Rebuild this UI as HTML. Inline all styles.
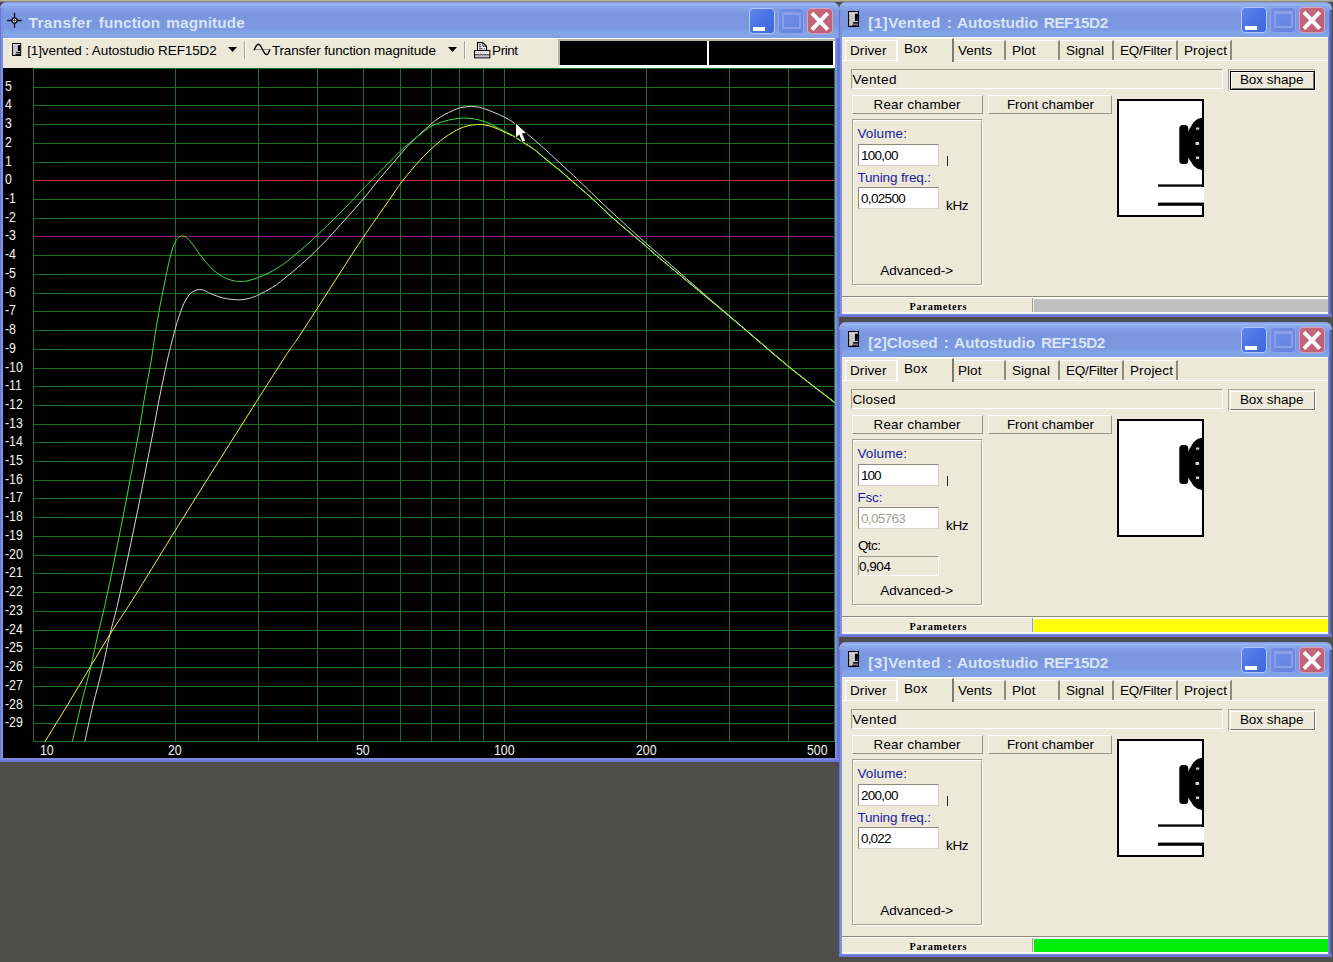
<!DOCTYPE html>
<html><head><meta charset="utf-8"><title>Transfer function magnitude</title>
<style>
html,body{margin:0;padding:0;}
body{width:1333px;height:962px;overflow:hidden;background:#4e4e4c;position:relative;font-family:"Liberation Sans", sans-serif;}
.b{position:absolute;box-sizing:border-box;}
.t{position:absolute;white-space:pre;display:block;}
svg{position:absolute;overflow:visible;}
.tb{background:linear-gradient(to bottom,#7f95da 0px,#9bb6f4 2px,#8eabee 4px,#7f9ce4 8px,#7a96df 14px,#7b98e0 26px,#81a5e7 31px,#82a6e8 33px,#7e9ee4 100%);}
.raised{background:#ece9d8;border-top:1px solid #fff;border-left:1px solid #fff;border-right:1px solid #99968a;border-bottom:1px solid #99968a;}
.sunk{border-top:1px solid #9d9a8a;border-left:1px solid #9d9a8a;border-right:1px solid #fff;border-bottom:1px solid #fff;}
</style></head><body>
<div class="b" style="left:0px;top:0px;width:1333px;height:2px;background:linear-gradient(to bottom,#b9b39b 0,#b3ad96 1px,#6d6a5e 2px);"></div>
<div class="b" style="left:0px;top:2px;width:839px;height:760px;background:#7685dc;border-radius:7px 7px 0 0;"></div>
<div class="b tb" style="left:0px;top:2px;width:839px;height:36px;border-radius:7px 7px 0 0;"></div>
<div class="b" style="left:0px;top:8px;width:1px;height:754px;background:#6a74d2;"></div>
<div class="b" style="left:1px;top:8px;width:2px;height:754px;background:#7b93e0;"></div>
<div class="b" style="left:835px;top:38px;width:2px;height:724px;background:#7b8fe0;"></div>
<div class="b" style="left:837px;top:38px;width:2px;height:724px;background:#6472d2;"></div>
<div class="b" style="left:0px;top:758px;width:839px;height:2px;background:#7a88e2;"></div>
<div class="b" style="left:0px;top:760px;width:839px;height:2px;background:#6a76d6;"></div>
<svg width="18" height="18" style="left:6px;top:11.7px"><path d="M8.5 0.8 V15.8 M1.2 8.5 H15.6" stroke="#0a0a1e" stroke-width="1.3" fill="none"/><circle cx="8.5" cy="8.5" r="2.6" fill="#fff" stroke="#0a0a1e" stroke-width="1.3"/><path d="M8.5 6.5V10.5M6.5 8.5H10.5" stroke="#444" stroke-width="0.8"/></svg><span class="t" style="left:28.60px;top:15.35px;font-size:15.3px;line-height:15.3px;color:#d9e4f9;letter-spacing:0.389px;font-family:'Liberation Sans', sans-serif;font-weight:bold;">Transfer</span>
<span class="t" style="left:98.80px;top:15.35px;font-size:15.3px;line-height:15.3px;color:#d9e4f9;letter-spacing:0.138px;font-family:'Liberation Sans', sans-serif;font-weight:bold;">function</span>
<span class="t" style="left:166.30px;top:15.35px;font-size:15.3px;line-height:15.3px;color:#d9e4f9;letter-spacing:0.143px;font-family:'Liberation Sans', sans-serif;font-weight:bold;">magnitude</span>
<div class="b" style="left:749px;top:8px;width:26px;height:26px;border-radius:4px;border:1px solid #b4c8f6;background:linear-gradient(135deg,#5f88ee 0%,#4a74e4 45%,#3f68dc 100%);"><div class="b" style="left:3px;top:17.5px;width:11.5px;height:4px;background:#fff;"></div>
</div>
<div class="b" style="left:778px;top:8px;width:26px;height:26px;border-radius:4px;border:1px solid #8ea3ea;background:linear-gradient(135deg,#728fe6 0%,#6483de 100%);"><div class="b" style="left:3px;top:3px;width:19px;height:17px;border:2px solid #8a9fea;border-top:3px solid #8a9fea;"></div>
</div>
<div class="b" style="left:807px;top:8px;width:26px;height:26px;border-radius:4px;border:1px solid #d9a0b6;background:linear-gradient(135deg,#c8687e 0%,#bd5f78 100%);"><svg width="24" height="24" style="left:0;top:0"><path d="M3.9 4.1 L19.8 20.6 M19.8 4.1 L3.9 20.6" stroke="#fff" stroke-width="3.9" stroke-linecap="butt" fill="none"/></svg></div>
<div class="b" style="left:3px;top:38px;width:832px;height:30px;background:#ece9d8;border-top:1px solid #fff;"></div>
<svg width="9.2" height="13" viewBox="0 0 11 16" preserveAspectRatio="none" style="left:12px;top:43px"><rect x="0" y="0" width="11" height="16" fill="#000"/><rect x="1.1" y="1.3" width="8.7" height="13.5" fill="#c6c6c6"/><rect x="1.1" y="1.3" width="8.7" height="1.2" fill="#e4e4e4"/><rect x="7" y="2.7" width="2.8" height="7.2" fill="#000"/><rect x="5" y="11.2" width="4.8" height="1.5" fill="#000"/><rect x="4.2" y="13.6" width="5.6" height="1.2" fill="#111"/></svg><span class="t" style="left:27.20px;top:44.07px;font-size:13.5px;line-height:13.5px;color:#000;letter-spacing:-0.116px;font-family:'Liberation Sans', sans-serif;">[1]vented : Autostudio REF15D2</span>
<svg width="12" height="8" style="left:227px;top:46px"><path d="M1 1 H10 L5.5 6 Z" fill="#000"/></svg><div class="b" style="left:244px;top:41px;width:1px;height:18px;background:#a7a592;"></div>
<div class="b" style="left:245px;top:41px;width:1px;height:18px;background:#fff;"></div>
<svg width="20" height="14" style="left:252px;top:43px"><path d="M2.5 6.5H18" stroke="#777" stroke-width="0.8" fill="none"/><path d="M2 7.2 C3.5 3.5,4.5 1.2,6.5 1.2 S9 4,10.5 6.5 S13 11.6,14.6 11.6 S17 9,18 6.3" stroke="#000" stroke-width="1.35" fill="none"/></svg><span class="t" style="left:271.90px;top:44.07px;font-size:13.5px;line-height:13.5px;color:#000;letter-spacing:-0.138px;font-family:'Liberation Sans', sans-serif;">Transfer function magnitude</span>
<svg width="12" height="8" style="left:447px;top:46px"><path d="M1 1 H10 L5.5 6 Z" fill="#000"/></svg><div class="b" style="left:464px;top:41px;width:1px;height:18px;background:#a7a592;"></div>
<div class="b" style="left:465px;top:41px;width:1px;height:18px;background:#fff;"></div>
<svg width="20" height="18" style="left:473px;top:41px"><path d="M4.5 9.5V1.6H9.8L13.5 5.3V9.5Z" fill="#fff" stroke="#000" stroke-width="1.1"/><path d="M9.8 1.6V5.3H13.5" fill="none" stroke="#000" stroke-width="0.8"/><rect x="6" y="3.4" width="1.8" height="0.9" fill="#000"/><rect x="6" y="5.4" width="2.4" height="0.9" fill="#000"/><rect x="6" y="7.4" width="3.6" height="0.9" fill="#000"/><rect x="10.8" y="7.4" width="1.1" height="0.9" fill="#000"/><rect x="1.6" y="9.6" width="15.2" height="7.2" fill="#dcdcdc" stroke="#000" stroke-width="1.1"/><rect x="2.2" y="10.2" width="14" height="3.2" fill="#f6f6f6"/><path d="M3 11.8H15" stroke="#9a9a9a" stroke-width="1.1" stroke-dasharray="1 1"/><path d="M1.6 13.9H16.8" stroke="#000" stroke-width="1"/><rect x="2.2" y="14.5" width="14" height="1.7" fill="#c4c4c4"/></svg><span class="t" style="left:492.10px;top:44.07px;font-size:13.5px;line-height:13.5px;color:#000;letter-spacing:-0.440px;font-family:'Liberation Sans', sans-serif;">Print</span>
<div class="b" style="left:558px;top:39px;width:277px;height:29px;background:#fdfdfb;"></div>
<div class="b" style="left:558px;top:39px;width:277px;height:2px;background:#b6b2a4;"></div>
<div class="b" style="left:558px;top:39px;width:2px;height:26px;background:#b6b2a4;"></div>
<div class="b" style="left:560px;top:41px;width:147px;height:24px;background:#000;"></div>
<div class="b" style="left:709px;top:41px;width:124px;height:24px;background:#000;"></div>
<div class="b" style="left:3px;top:68px;width:832px;height:690px;background:#000;"></div>
<svg width="1333" height="962" style="left:0;top:0" viewBox="0 0 1333 962"><g shape-rendering="crispEdges" fill="none"><path d="M33 68.5H835" stroke="#1b741b" stroke-width="1"/><path d="M33 87.5H835" stroke="#1b741b" stroke-width="1"/><path d="M33 105.5H835" stroke="#1b741b" stroke-width="1"/><path d="M33 124.5H835" stroke="#1b741b" stroke-width="1"/><path d="M33 143.5H835" stroke="#1b741b" stroke-width="1"/><path d="M33 162.5H835" stroke="#1b741b" stroke-width="1"/><path d="M33 180.5H835" stroke="#d42a2a" stroke-width="1"/><path d="M33 199.5H835" stroke="#1b741b" stroke-width="1"/><path d="M33 218.5H835" stroke="#1b741b" stroke-width="1"/><path d="M33 236.5H835" stroke="#8c1f8c" stroke-width="1"/><path d="M33 255.5H835" stroke="#1b741b" stroke-width="1"/><path d="M33 274.5H835" stroke="#1b741b" stroke-width="1"/><path d="M33 293.5H835" stroke="#1b741b" stroke-width="1"/><path d="M33 311.5H835" stroke="#1b741b" stroke-width="1"/><path d="M33 330.5H835" stroke="#1b741b" stroke-width="1"/><path d="M33 349.5H835" stroke="#1b741b" stroke-width="1"/><path d="M33 368.5H835" stroke="#1b741b" stroke-width="1"/><path d="M33 386.5H835" stroke="#1b741b" stroke-width="1"/><path d="M33 405.5H835" stroke="#1b741b" stroke-width="1"/><path d="M33 424.5H835" stroke="#1b741b" stroke-width="1"/><path d="M33 442.5H835" stroke="#1b741b" stroke-width="1"/><path d="M33 461.5H835" stroke="#1b741b" stroke-width="1"/><path d="M33 480.5H835" stroke="#1b741b" stroke-width="1"/><path d="M33 498.5H835" stroke="#1b741b" stroke-width="1"/><path d="M33 517.5H835" stroke="#1b741b" stroke-width="1"/><path d="M33 536.5H835" stroke="#1b741b" stroke-width="1"/><path d="M33 555.5H835" stroke="#1b741b" stroke-width="1"/><path d="M33 573.5H835" stroke="#1b741b" stroke-width="1"/><path d="M33 592.5H835" stroke="#1b741b" stroke-width="1"/><path d="M33 611.5H835" stroke="#1b741b" stroke-width="1"/><path d="M33 630.5H835" stroke="#1b741b" stroke-width="1"/><path d="M33 648.5H835" stroke="#1b741b" stroke-width="1"/><path d="M33 667.5H835" stroke="#1b741b" stroke-width="1"/><path d="M33 686.5H835" stroke="#1b741b" stroke-width="1"/><path d="M33 705.5H835" stroke="#1b741b" stroke-width="1"/><path d="M33 723.5H835" stroke="#1b741b" stroke-width="1"/><path d="M33 741.5H835" stroke="#1b741b" stroke-width="1"/><path d="M33.5 68V742" stroke="#1b741b" stroke-width="1"/><path d="M175.5 68V742" stroke="#1b741b" stroke-width="1"/><path d="M258.5 68V742" stroke="#1b741b" stroke-width="1"/><path d="M317.5 68V742" stroke="#1b741b" stroke-width="1"/><path d="M363.5 68V742" stroke="#1b741b" stroke-width="1"/><path d="M400.5 68V742" stroke="#1b741b" stroke-width="1"/><path d="M431.5 68V742" stroke="#1b741b" stroke-width="1"/><path d="M459.5 68V742" stroke="#1b741b" stroke-width="1"/><path d="M483.5 68V742" stroke="#1b741b" stroke-width="1"/><path d="M504.5 68V742" stroke="#1b741b" stroke-width="1"/><path d="M646.5 68V742" stroke="#1b741b" stroke-width="1"/><path d="M729.5 68V742" stroke="#1b741b" stroke-width="1"/><path d="M788.5 68V742" stroke="#1b741b" stroke-width="1"/><path d="M834.5 68V742" stroke="#1b741b" stroke-width="1"/></g><g fill="none" stroke-width="1" stroke-linejoin="round"><path d="M84.9 741.5C86.2 735.4,90.0 717.4,93.0 705.0C96.0 692.6,99.9 678.8,102.7 667.0C105.5 655.2,107.3 645.2,110.0 634.0C112.7 622.8,114.3 619.0,118.6 600.0C122.9 581.0,130.2 546.7,135.7 520.0C141.2 493.3,147.4 460.8,151.5 440.0C155.6 419.2,157.3 408.3,160.0 395.0C162.7 381.7,165.6 368.1,167.4 360.0C169.2 351.9,169.6 350.9,170.7 346.4C171.8 341.9,173.0 337.2,174.1 333.1C175.2 329.0,176.3 325.1,177.4 321.5C178.5 317.9,179.6 314.6,180.7 311.5C181.8 308.4,182.9 305.6,184.0 303.2C185.1 300.8,186.3 299.0,187.4 297.3C188.5 295.6,189.4 294.3,190.7 293.2C191.9 292.1,193.4 291.3,194.9 290.7C196.4 290.1,198.2 289.5,199.9 289.5C201.6 289.5,203.2 290.1,204.8 290.7C206.5 291.3,207.6 292.2,209.8 293.2C212.0 294.2,215.4 295.6,218.2 296.5C221.0 297.4,223.7 298.2,226.5 298.7C229.3 299.2,232.3 299.5,234.8 299.7C237.3 299.9,239.2 299.9,241.4 299.7C243.6 299.5,245.9 299.2,248.1 298.7C250.3 298.2,253.1 297.1,254.8 296.5C256.6 295.9,256.4 295.9,258.6 294.8C260.8 293.7,265.1 291.5,268.1 289.9C271.1 288.2,273.6 286.8,276.4 284.9C279.2 282.9,281.9 280.4,284.7 278.2C287.5 276.0,290.2 273.8,293.0 271.5C295.8 269.2,298.5 266.9,301.3 264.4C304.1 261.9,307.3 259.0,310.0 256.5C312.7 254.0,314.3 252.4,317.5 249.2C320.7 246.0,324.5 242.1,329.1 237.2C333.7 232.3,339.2 226.2,344.9 219.9C350.6 213.6,357.6 205.7,363.2 199.1C368.8 192.5,372.0 187.9,378.2 180.5C384.4 173.1,395.1 160.6,400.4 154.5C405.7 148.4,404.7 148.8,409.9 143.7C415.1 138.6,425.9 128.4,431.5 123.7C437.1 119.0,439.6 117.6,443.2 115.4C446.8 113.2,450.5 111.7,453.2 110.4C455.9 109.2,457.3 108.5,459.5 107.9C461.7 107.3,464.5 107.0,466.5 106.8C468.5 106.5,469.8 106.4,471.5 106.4C473.2 106.4,474.5 106.5,476.5 106.8C478.5 107.1,480.7 107.5,483.5 108.4C486.3 109.3,489.6 110.6,493.1 112.1C496.6 113.5,500.8 115.2,504.4 117.1C508.0 119.0,511.0 120.7,514.7 123.4C518.4 126.1,523.9 131.0,526.4 133.1C528.9 135.2,527.6 134.1,530.0 136.2C532.4 138.3,537.3 142.4,540.9 145.6C544.5 148.8,547.4 151.5,551.8 155.5C556.2 159.5,562.6 165.5,567.1 169.7C571.6 173.9,575.6 177.6,578.8 180.6C581.9 183.6,582.7 184.3,586.0 187.5C589.3 190.7,593.3 194.7,598.4 199.5C603.5 204.3,608.5 209.2,616.5 216.5C624.5 223.8,638.5 236.6,646.4 243.6C654.3 250.6,655.0 250.9,663.9 258.7C672.8 266.5,689.0 280.9,700.0 290.5C711.0 300.1,715.1 303.6,729.9 316.2C744.7 328.8,771.2 352.0,788.6 366.3C806.0 380.6,826.9 396.2,834.5 402.2" stroke="#d9d9d9"/><path d="M45.0 741.5C48.8 735.4,60.0 717.4,67.5 705.0C75.0 692.6,82.7 679.5,90.2 667.0C97.7 654.5,105.7 641.2,112.7 630.0C119.7 618.8,120.9 618.3,132.4 600.0C143.9 581.7,165.2 546.7,181.8 520.0C198.4 493.3,215.3 466.7,232.2 440.0C249.1 413.3,272.2 376.7,283.0 360.0C293.8 343.3,290.9 348.6,296.7 340.0C302.4 331.4,310.3 319.3,317.5 308.1C324.7 296.9,332.4 284.8,340.0 273.0C347.6 261.2,354.9 249.7,363.2 237.4C371.5 225.1,383.3 208.5,389.8 199.1C396.3 189.7,397.4 187.6,402.4 181.1C407.4 174.6,415.0 165.7,419.9 160.3C424.8 154.9,427.6 152.3,431.5 148.7C435.4 145.1,439.6 141.5,443.2 138.7C446.8 135.9,450.5 133.8,453.2 132.1C455.9 130.4,457.0 129.8,459.5 128.7C462.0 127.6,465.4 126.4,468.2 125.7C471.0 125.0,473.9 124.8,476.5 124.6C479.1 124.4,480.7 124.3,483.5 124.7C486.3 125.1,489.6 125.9,493.1 127.1C496.6 128.3,500.8 130.5,504.4 132.1C508.0 133.7,512.0 135.3,514.8 136.9C517.6 138.5,518.9 139.8,521.4 141.4C523.9 143.0,527.9 145.3,530.0 146.6C532.1 147.9,531.3 147.2,534.1 149.4C536.9 151.6,542.5 156.6,546.7 160.0C550.9 163.4,554.7 166.2,559.1 169.9C563.5 173.6,567.3 177.1,572.9 181.9C578.5 186.8,585.9 192.9,592.6 199.0C599.3 205.1,604.1 210.4,613.1 218.3C622.1 226.2,638.5 239.8,646.4 246.6C654.3 253.4,646.7 247.3,660.6 259.0C674.5 270.7,708.6 298.8,729.9 316.7C751.2 334.6,771.2 352.3,788.6 366.6C806.0 380.9,826.9 396.5,834.5 402.5" stroke="#f4f43c"/><path d="M72.4 741.5C73.8 735.4,78.0 717.4,81.0 705.0C84.0 692.6,87.9 678.8,90.7 667.0C93.5 655.2,95.5 645.2,98.0 634.0C100.5 622.8,101.9 619.0,106.0 600.0C110.1 581.0,117.2 546.7,122.4 520.0C127.6 493.3,133.6 460.8,137.4 440.0C141.2 419.2,142.7 408.3,145.0 395.0C147.3 381.7,149.6 370.3,151.3 360.0C153.0 349.7,153.9 342.0,155.3 333.1C156.7 324.2,158.6 313.7,159.9 306.5C161.2 299.3,162.1 295.4,163.2 289.9C164.3 284.3,165.5 278.5,166.6 273.2C167.7 267.9,168.8 262.6,169.9 258.2C171.0 253.8,172.1 249.7,173.2 246.6C174.3 243.5,175.5 241.3,176.6 239.6C177.7 237.9,178.9 237.2,179.9 236.6C180.9 236.0,181.4 235.8,182.4 235.9C183.4 236.0,184.4 236.1,185.7 236.9C186.9 237.7,188.4 239.1,189.9 240.8C191.4 242.6,193.0 244.8,194.9 247.4C196.8 250.0,199.0 253.4,201.5 256.6C204.0 259.8,207.0 263.7,209.8 266.6C212.6 269.5,215.4 272.0,218.2 274.0C221.0 276.0,223.7 277.3,226.5 278.5C229.3 279.7,232.6 280.5,234.8 281.0C237.0 281.5,237.6 281.6,239.8 281.5C242.0 281.4,245.0 281.4,248.1 280.7C251.2 280.0,255.3 278.6,258.6 277.4C261.9 276.1,265.1 274.6,268.1 273.2C271.1 271.8,273.6 270.4,276.4 268.7C279.2 267.0,281.9 265.2,284.7 263.2C287.5 261.2,290.2 258.9,293.0 256.6C295.8 254.3,298.5 252.1,301.3 249.6C304.1 247.1,307.3 244.3,310.0 241.9C312.7 239.5,312.5 239.7,317.5 234.9C322.5 230.1,332.3 220.9,339.9 213.2C347.5 205.5,358.1 194.2,363.2 188.8C368.3 183.4,364.5 187.3,370.7 181.0C376.9 174.7,393.9 157.5,400.4 151.2C406.9 144.8,406.6 145.7,409.9 142.9C413.1 140.1,416.3 137.4,419.9 134.6C423.5 131.8,427.6 128.4,431.5 126.2C435.4 124.0,439.6 122.8,443.2 121.6C446.8 120.4,450.5 119.7,453.2 119.2C455.9 118.7,457.6 118.6,459.5 118.4C461.4 118.2,462.5 118.0,464.8 118.1C467.1 118.1,470.0 118.2,473.1 118.7C476.2 119.2,480.2 120.1,483.5 121.2C486.8 122.3,489.6 123.7,493.1 125.4C496.6 127.1,500.8 129.3,504.4 131.2C508.0 133.0,512.0 134.8,514.8 136.5C517.6 138.2,518.9 139.5,521.4 141.2C523.9 142.8,527.9 145.1,530.0 146.4C532.1 147.7,531.3 147.0,534.1 149.2C536.9 151.4,542.5 156.4,546.7 159.8C550.9 163.2,554.7 166.0,559.1 169.7C563.5 173.3,567.3 176.8,572.9 181.7C578.5 186.5,585.9 192.7,592.6 198.8C599.3 204.9,604.1 210.2,613.1 218.1C622.1 226.0,638.5 239.6,646.4 246.4C654.3 253.2,646.7 247.2,660.6 258.9C674.5 270.6,708.6 298.7,729.9 316.6C751.2 334.5,771.2 352.2,788.6 366.5C806.0 380.8,826.9 396.4,834.5 402.4" stroke="#3fe03f"/><path d="M504.4 132.1C506.1 132.9,512.0 135.3,514.8 136.9C517.6 138.5,518.9 139.8,521.4 141.4C523.9 143.0,527.9 145.3,530.0 146.6C532.1 147.9,531.3 147.2,534.1 149.4C536.9 151.6,542.5 156.6,546.7 160.0C550.9 163.4,554.7 166.2,559.1 169.9C563.5 173.6,567.3 177.1,572.9 181.9C578.5 186.8,585.9 192.9,592.6 199.0C599.3 205.1,604.1 210.4,613.1 218.3C622.1 226.2,638.5 239.8,646.4 246.6C654.3 253.4,646.7 247.3,660.6 259.0C674.5 270.7,708.6 298.8,729.9 316.7C751.2 334.6,771.2 352.3,788.6 366.6C806.0 380.9,826.9 396.5,834.5 402.5" stroke="#e8f03c" stroke-dasharray="1.6 1.6"/></g><path d="M516 123.8 L516 137.4 L519.3 134.4 L522.3 141.7 L525.1 140.6 L522 133.4 L526 133 Z" fill="#fff" stroke="#000" stroke-width="1.6" stroke-linejoin="miter" paint-order="stroke"/></svg>
<span class="t" style="left:4.80px;top:79.25px;font-size:14px;line-height:14px;color:#f2f2f2;letter-spacing:0.000px;font-family:'Liberation Sans', sans-serif;transform:scaleX(0.88);transform-origin:0 50%;">5</span>
<span class="t" style="left:4.80px;top:97.25px;font-size:14px;line-height:14px;color:#f2f2f2;letter-spacing:0.000px;font-family:'Liberation Sans', sans-serif;transform:scaleX(0.88);transform-origin:0 50%;">4</span>
<span class="t" style="left:4.80px;top:116.25px;font-size:14px;line-height:14px;color:#f2f2f2;letter-spacing:0.000px;font-family:'Liberation Sans', sans-serif;transform:scaleX(0.88);transform-origin:0 50%;">3</span>
<span class="t" style="left:4.80px;top:135.25px;font-size:14px;line-height:14px;color:#f2f2f2;letter-spacing:0.000px;font-family:'Liberation Sans', sans-serif;transform:scaleX(0.88);transform-origin:0 50%;">2</span>
<span class="t" style="left:4.80px;top:154.25px;font-size:14px;line-height:14px;color:#f2f2f2;letter-spacing:0.000px;font-family:'Liberation Sans', sans-serif;transform:scaleX(0.88);transform-origin:0 50%;">1</span>
<span class="t" style="left:4.80px;top:172.25px;font-size:14px;line-height:14px;color:#f2f2f2;letter-spacing:0.000px;font-family:'Liberation Sans', sans-serif;transform:scaleX(0.88);transform-origin:0 50%;">0</span>
<span class="t" style="left:4.80px;top:191.25px;font-size:14px;line-height:14px;color:#f2f2f2;letter-spacing:0.000px;font-family:'Liberation Sans', sans-serif;transform:scaleX(0.88);transform-origin:0 50%;">-1</span>
<span class="t" style="left:4.80px;top:210.25px;font-size:14px;line-height:14px;color:#f2f2f2;letter-spacing:0.000px;font-family:'Liberation Sans', sans-serif;transform:scaleX(0.88);transform-origin:0 50%;">-2</span>
<span class="t" style="left:4.80px;top:228.25px;font-size:14px;line-height:14px;color:#f2f2f2;letter-spacing:0.000px;font-family:'Liberation Sans', sans-serif;transform:scaleX(0.88);transform-origin:0 50%;">-3</span>
<span class="t" style="left:4.80px;top:247.25px;font-size:14px;line-height:14px;color:#f2f2f2;letter-spacing:0.000px;font-family:'Liberation Sans', sans-serif;transform:scaleX(0.88);transform-origin:0 50%;">-4</span>
<span class="t" style="left:4.80px;top:266.25px;font-size:14px;line-height:14px;color:#f2f2f2;letter-spacing:0.000px;font-family:'Liberation Sans', sans-serif;transform:scaleX(0.88);transform-origin:0 50%;">-5</span>
<span class="t" style="left:4.80px;top:285.25px;font-size:14px;line-height:14px;color:#f2f2f2;letter-spacing:0.000px;font-family:'Liberation Sans', sans-serif;transform:scaleX(0.88);transform-origin:0 50%;">-6</span>
<span class="t" style="left:4.80px;top:303.25px;font-size:14px;line-height:14px;color:#f2f2f2;letter-spacing:0.000px;font-family:'Liberation Sans', sans-serif;transform:scaleX(0.88);transform-origin:0 50%;">-7</span>
<span class="t" style="left:4.80px;top:322.25px;font-size:14px;line-height:14px;color:#f2f2f2;letter-spacing:0.000px;font-family:'Liberation Sans', sans-serif;transform:scaleX(0.88);transform-origin:0 50%;">-8</span>
<span class="t" style="left:4.80px;top:341.25px;font-size:14px;line-height:14px;color:#f2f2f2;letter-spacing:0.000px;font-family:'Liberation Sans', sans-serif;transform:scaleX(0.88);transform-origin:0 50%;">-9</span>
<span class="t" style="left:4.80px;top:360.25px;font-size:14px;line-height:14px;color:#f2f2f2;letter-spacing:0.000px;font-family:'Liberation Sans', sans-serif;transform:scaleX(0.88);transform-origin:0 50%;">-10</span>
<span class="t" style="left:4.80px;top:378.25px;font-size:14px;line-height:14px;color:#f2f2f2;letter-spacing:0.000px;font-family:'Liberation Sans', sans-serif;transform:scaleX(0.88);transform-origin:0 50%;">-11</span>
<span class="t" style="left:4.80px;top:397.25px;font-size:14px;line-height:14px;color:#f2f2f2;letter-spacing:0.000px;font-family:'Liberation Sans', sans-serif;transform:scaleX(0.88);transform-origin:0 50%;">-12</span>
<span class="t" style="left:4.80px;top:416.25px;font-size:14px;line-height:14px;color:#f2f2f2;letter-spacing:0.000px;font-family:'Liberation Sans', sans-serif;transform:scaleX(0.88);transform-origin:0 50%;">-13</span>
<span class="t" style="left:4.80px;top:434.25px;font-size:14px;line-height:14px;color:#f2f2f2;letter-spacing:0.000px;font-family:'Liberation Sans', sans-serif;transform:scaleX(0.88);transform-origin:0 50%;">-14</span>
<span class="t" style="left:4.80px;top:453.25px;font-size:14px;line-height:14px;color:#f2f2f2;letter-spacing:0.000px;font-family:'Liberation Sans', sans-serif;transform:scaleX(0.88);transform-origin:0 50%;">-15</span>
<span class="t" style="left:4.80px;top:472.25px;font-size:14px;line-height:14px;color:#f2f2f2;letter-spacing:0.000px;font-family:'Liberation Sans', sans-serif;transform:scaleX(0.88);transform-origin:0 50%;">-16</span>
<span class="t" style="left:4.80px;top:490.25px;font-size:14px;line-height:14px;color:#f2f2f2;letter-spacing:0.000px;font-family:'Liberation Sans', sans-serif;transform:scaleX(0.88);transform-origin:0 50%;">-17</span>
<span class="t" style="left:4.80px;top:509.25px;font-size:14px;line-height:14px;color:#f2f2f2;letter-spacing:0.000px;font-family:'Liberation Sans', sans-serif;transform:scaleX(0.88);transform-origin:0 50%;">-18</span>
<span class="t" style="left:4.80px;top:528.25px;font-size:14px;line-height:14px;color:#f2f2f2;letter-spacing:0.000px;font-family:'Liberation Sans', sans-serif;transform:scaleX(0.88);transform-origin:0 50%;">-19</span>
<span class="t" style="left:4.80px;top:547.25px;font-size:14px;line-height:14px;color:#f2f2f2;letter-spacing:0.000px;font-family:'Liberation Sans', sans-serif;transform:scaleX(0.88);transform-origin:0 50%;">-20</span>
<span class="t" style="left:4.80px;top:565.25px;font-size:14px;line-height:14px;color:#f2f2f2;letter-spacing:0.000px;font-family:'Liberation Sans', sans-serif;transform:scaleX(0.88);transform-origin:0 50%;">-21</span>
<span class="t" style="left:4.80px;top:584.25px;font-size:14px;line-height:14px;color:#f2f2f2;letter-spacing:0.000px;font-family:'Liberation Sans', sans-serif;transform:scaleX(0.88);transform-origin:0 50%;">-22</span>
<span class="t" style="left:4.80px;top:603.25px;font-size:14px;line-height:14px;color:#f2f2f2;letter-spacing:0.000px;font-family:'Liberation Sans', sans-serif;transform:scaleX(0.88);transform-origin:0 50%;">-23</span>
<span class="t" style="left:4.80px;top:622.25px;font-size:14px;line-height:14px;color:#f2f2f2;letter-spacing:0.000px;font-family:'Liberation Sans', sans-serif;transform:scaleX(0.88);transform-origin:0 50%;">-24</span>
<span class="t" style="left:4.80px;top:640.25px;font-size:14px;line-height:14px;color:#f2f2f2;letter-spacing:0.000px;font-family:'Liberation Sans', sans-serif;transform:scaleX(0.88);transform-origin:0 50%;">-25</span>
<span class="t" style="left:4.80px;top:659.25px;font-size:14px;line-height:14px;color:#f2f2f2;letter-spacing:0.000px;font-family:'Liberation Sans', sans-serif;transform:scaleX(0.88);transform-origin:0 50%;">-26</span>
<span class="t" style="left:4.80px;top:678.25px;font-size:14px;line-height:14px;color:#f2f2f2;letter-spacing:0.000px;font-family:'Liberation Sans', sans-serif;transform:scaleX(0.88);transform-origin:0 50%;">-27</span>
<span class="t" style="left:4.80px;top:697.25px;font-size:14px;line-height:14px;color:#f2f2f2;letter-spacing:0.000px;font-family:'Liberation Sans', sans-serif;transform:scaleX(0.88);transform-origin:0 50%;">-28</span>
<span class="t" style="left:4.80px;top:715.25px;font-size:14px;line-height:14px;color:#f2f2f2;letter-spacing:0.000px;font-family:'Liberation Sans', sans-serif;transform:scaleX(0.88);transform-origin:0 50%;">-29</span>
<span class="t" style="left:40.20px;top:743.15px;font-size:14px;line-height:14px;color:#f2f2f2;letter-spacing:0.000px;font-family:'Liberation Sans', sans-serif;transform:scaleX(0.88);transform-origin:0 50%;">10</span>
<span class="t" style="left:168.20px;top:743.15px;font-size:14px;line-height:14px;color:#f2f2f2;letter-spacing:0.000px;font-family:'Liberation Sans', sans-serif;transform:scaleX(0.88);transform-origin:0 50%;">20</span>
<span class="t" style="left:355.70px;top:743.15px;font-size:14px;line-height:14px;color:#f2f2f2;letter-spacing:0.000px;font-family:'Liberation Sans', sans-serif;transform:scaleX(0.88);transform-origin:0 50%;">50</span>
<span class="t" style="left:493.70px;top:743.15px;font-size:14px;line-height:14px;color:#f2f2f2;letter-spacing:0.000px;font-family:'Liberation Sans', sans-serif;transform:scaleX(0.88);transform-origin:0 50%;">100</span>
<span class="t" style="left:635.70px;top:743.15px;font-size:14px;line-height:14px;color:#f2f2f2;letter-spacing:0.000px;font-family:'Liberation Sans', sans-serif;transform:scaleX(0.88);transform-origin:0 50%;">200</span>
<span class="t" style="left:806.70px;top:743.15px;font-size:14px;line-height:14px;color:#f2f2f2;letter-spacing:0.000px;font-family:'Liberation Sans', sans-serif;transform:scaleX(0.88);transform-origin:0 50%;">500</span>
<div class="b" style="left:839px;top:2px;width:493px;height:315px;background:#7685dc;border-radius:7px 7px 0 0;"></div>
<div class="b tb" style="left:839px;top:2px;width:493px;height:35px;border-radius:7px 7px 0 0;"></div>
<div class="b" style="left:839px;top:10px;width:1px;height:307px;background:#6a74d2;"></div>
<div class="b" style="left:840px;top:10px;width:2px;height:307px;background:#7b93e0;"></div>
<div class="b" style="left:1328px;top:37px;width:1px;height:280px;background:#7587dc;"></div>
<div class="b" style="left:1329px;top:10px;width:1px;height:307px;background:#6878d0;"></div>
<div class="b" style="left:1330px;top:10px;width:2px;height:307px;background:linear-gradient(to right,#5a68bc,#4c5596);"></div>
<div class="b" style="left:839px;top:314px;width:493px;height:1px;background:#7a88e2;"></div>
<div class="b" style="left:839px;top:315px;width:493px;height:2px;background:#6a76d6;"></div>
<div class="b" style="left:842px;top:37px;width:486px;height:277px;background:#ece9d8;border-top:1px solid #fff;"></div>
<svg width="11" height="16" viewBox="0 0 11 16" preserveAspectRatio="none" style="left:848px;top:11px"><rect x="0" y="0" width="11" height="16" fill="#000"/><rect x="1.1" y="1.3" width="8.7" height="13.5" fill="#c6c6c6"/><rect x="1.1" y="1.3" width="8.7" height="1.2" fill="#e4e4e4"/><rect x="7" y="2.7" width="2.8" height="7.2" fill="#000"/><rect x="5" y="11.2" width="4.8" height="1.5" fill="#000"/><rect x="4.2" y="13.6" width="5.6" height="1.2" fill="#111"/></svg><span class="t" style="left:868.20px;top:14.65px;font-size:15.3px;line-height:15.3px;color:#d9e4f9;letter-spacing:0.417px;font-family:'Liberation Sans', sans-serif;font-weight:bold;">[1]Vented</span>
<span class="t" style="left:946.70px;top:14.65px;font-size:15.3px;line-height:15.3px;color:#d9e4f9;letter-spacing:0.000px;font-family:'Liberation Sans', sans-serif;font-weight:bold;">:</span>
<span class="t" style="left:957.00px;top:14.65px;font-size:15.3px;line-height:15.3px;color:#d9e4f9;letter-spacing:0.030px;font-family:'Liberation Sans', sans-serif;font-weight:bold;">Autostudio</span>
<span class="t" style="left:1043.80px;top:14.65px;font-size:15.3px;line-height:15.3px;color:#d9e4f9;letter-spacing:-0.463px;font-family:'Liberation Sans', sans-serif;font-weight:bold;">REF15D2</span>
<div class="b" style="left:1241px;top:7px;width:26px;height:26px;border-radius:4px;border:1px solid #b4c8f6;background:linear-gradient(135deg,#5f88ee 0%,#4a74e4 45%,#3f68dc 100%);"><div class="b" style="left:3px;top:17.5px;width:11.5px;height:4px;background:#fff;"></div>
</div>
<div class="b" style="left:1270px;top:7px;width:26px;height:26px;border-radius:4px;border:1px solid #8ea3ea;background:linear-gradient(135deg,#728fe6 0%,#6483de 100%);"><div class="b" style="left:3px;top:3px;width:19px;height:17px;border:2px solid #8a9fea;border-top:3px solid #8a9fea;"></div>
</div>
<div class="b" style="left:1299px;top:7px;width:26px;height:26px;border-radius:4px;border:1px solid #d9a0b6;background:linear-gradient(135deg,#c8687e 0%,#bd5f78 100%);"><svg width="24" height="24" style="left:0;top:0"><path d="M3.9 4.1 L19.8 20.6 M19.8 4.1 L3.9 20.6" stroke="#fff" stroke-width="3.9" stroke-linecap="butt" fill="none"/></svg></div>
<div class="b" style="left:842px;top:60px;width:486px;height:1px;background:#fff;"></div>
<div class="b" style="left:845px;top:40px;width:52px;height:20px;background:#ece9d8;border-top:1px solid #fff;border-left:1px solid #fff;border-right:1px solid #fbfaf4;"></div>
<span class="t" style="left:849.90px;top:44.17px;font-size:13.5px;line-height:13.5px;color:#000;letter-spacing:0.120px;font-family:'Liberation Sans', sans-serif;">Driver</span>
<div class="b" style="left:897px;top:38px;width:57px;height:24px;background:#ece9d8;border-top:1px solid #fff;border-left:1px solid #fff;border-right:2px solid #7d7a6b;"></div>
<span class="t" style="left:903.90px;top:42.17px;font-size:13.5px;line-height:13.5px;color:#000;letter-spacing:0.119px;font-family:'Liberation Sans', sans-serif;">Box</span>
<div class="b" style="left:954px;top:40px;width:52px;height:20px;background:#ece9d8;border-top:1px solid #fff;border-right:2px solid #8f8c7c;"></div>
<span class="t" style="left:957.90px;top:44.17px;font-size:13.5px;line-height:13.5px;color:#000;letter-spacing:0.056px;font-family:'Liberation Sans', sans-serif;">Vents</span>
<div class="b" style="left:1006px;top:40px;width:54px;height:20px;background:#ece9d8;border-top:1px solid #fff;border-right:2px solid #8f8c7c;"></div>
<span class="t" style="left:1011.90px;top:44.17px;font-size:13.5px;line-height:13.5px;color:#000;letter-spacing:0.079px;font-family:'Liberation Sans', sans-serif;">Plot</span>
<div class="b" style="left:1060px;top:40px;width:54px;height:20px;background:#ece9d8;border-top:1px solid #fff;border-right:2px solid #8f8c7c;"></div>
<span class="t" style="left:1065.90px;top:44.17px;font-size:13.5px;line-height:13.5px;color:#000;letter-spacing:0.095px;font-family:'Liberation Sans', sans-serif;">Signal</span>
<div class="b" style="left:1114px;top:40px;width:64px;height:20px;background:#ece9d8;border-top:1px solid #fff;border-right:2px solid #8f8c7c;"></div>
<span class="t" style="left:1119.90px;top:44.17px;font-size:13.5px;line-height:13.5px;color:#000;letter-spacing:-0.157px;font-family:'Liberation Sans', sans-serif;">EQ/Filter</span>
<div class="b" style="left:1178px;top:40px;width:54px;height:20px;background:#ece9d8;border-top:1px solid #fff;border-right:2px solid #8f8c7c;"></div>
<span class="t" style="left:1183.90px;top:44.17px;font-size:13.5px;line-height:13.5px;color:#000;letter-spacing:0.164px;font-family:'Liberation Sans', sans-serif;">Project</span>
<div class="b sunk" style="left:851px;top:69px;width:372px;height:20px;"></div>
<span class="t" style="left:852.40px;top:73.07px;font-size:13.5px;line-height:13.5px;color:#000;letter-spacing:0.391px;font-family:'Liberation Sans', sans-serif;">Vented</span>
<div class="b" style="left:1228px;top:69px;width:88px;height:22px;border-top:1px solid #aca899;border-left:1px solid #aca899;border-right:1px solid #fff;border-bottom:1px solid #fff;"></div>
<div class="b" style="left:1230px;top:71px;width:85px;height:19px;border:1px solid #000;background:#ece9d8;"></div>
<div class="b" style="left:1231px;top:72px;width:83px;height:17px;border-top:1px solid #fff;border-left:1px solid #fff;border-right:1px solid #77756a;border-bottom:1px solid #77756a;"></div>
<span class="t" style="left:1239.90px;top:73.37px;font-size:13.5px;line-height:13.5px;color:#000;letter-spacing:-0.037px;font-family:'Liberation Sans', sans-serif;">Box shape</span>
<div class="b raised" style="left:852px;top:95px;width:131px;height:19px;"></div>
<span class="t" style="left:873.60px;top:98.07px;font-size:13.5px;line-height:13.5px;color:#000;letter-spacing:0.133px;font-family:'Liberation Sans', sans-serif;">Rear chamber</span>
<div class="b raised" style="left:988px;top:95px;width:124px;height:19px;"></div>
<span class="t" style="left:1006.90px;top:98.07px;font-size:13.5px;line-height:13.5px;color:#000;letter-spacing:-0.065px;font-family:'Liberation Sans', sans-serif;">Front chamber</span>
<svg width="90" height="120" style="left:1117px;top:99px"><rect x="1" y="1" width="85" height="116" fill="#fff" stroke="#000" stroke-width="2"/><rect x="62.3" y="26" width="9" height="39" rx="3.5" fill="#000"/><path d="M70 34 L73 29.3 L76.5 23.3 L80.5 20 L86 18.6 V71.5 L80.5 69.8 L76.5 66.8 L73 61.2 L70 57 Z" fill="#000"/><rect x="79" y="28.5" width="3.2" height="2.2" fill="#cfcfcf"/><rect x="78.5" y="43" width="3.6" height="3" fill="#cfcfcf"/><rect x="79" y="57.5" width="3.2" height="2.6" fill="#cfcfcf"/><rect x="85" y="88" width="2" height="16" fill="#fff"/><rect x="41" y="85.4" width="46" height="2.3" fill="#000"/><rect x="41" y="103.6" width="46" height="3.2" fill="#000"/></svg><div class="b" style="left:852px;top:119px;width:131px;height:167px;border:1px solid #a5a292;border-right:1px solid #fff;border-bottom:1px solid #fff;"></div>
<div class="b" style="left:853px;top:120px;width:129px;height:165px;border-left:1px solid #fff;border-top:1px solid #fff;border-right:1px solid #a5a292;border-bottom:1px solid #a5a292;"></div>
<span class="t" style="left:857.40px;top:127.07px;font-size:13.5px;line-height:13.5px;color:#1a1aa4;letter-spacing:0.137px;font-family:'Liberation Sans', sans-serif;">Volume:</span>
<div class="b" style="left:858px;top:144px;width:81px;height:22px;background:#fff;border-top:1px solid #8c8a7c;border-left:1px solid #8c8a7c;border-right:1px solid #d8d5c6;border-bottom:1px solid #d8d5c6;"></div>
<div class="b" style="left:947px;top:156px;width:1px;height:10px;background:#222;"></div>
<span class="t" style="left:861.00px;top:148.67px;font-size:13.5px;line-height:13.5px;color:#000;letter-spacing:-0.738px;font-family:'Liberation Sans', sans-serif;">100,00</span>
<span class="t" style="left:857.40px;top:170.87px;font-size:13.5px;line-height:13.5px;color:#1a1aa4;letter-spacing:-0.141px;font-family:'Liberation Sans', sans-serif;">Tuning freq.:</span>
<div class="b" style="left:858px;top:187px;width:81px;height:22px;background:#fff;border-top:1px solid #8c8a7c;border-left:1px solid #8c8a7c;border-right:1px solid #d8d5c6;border-bottom:1px solid #d8d5c6;"></div>
<span class="t" style="left:861.00px;top:191.57px;font-size:13.5px;line-height:13.5px;color:#000;letter-spacing:-0.667px;font-family:'Liberation Sans', sans-serif;">0,02500</span>
<span class="t" style="left:946.00px;top:198.77px;font-size:13.5px;line-height:13.5px;color:#000;letter-spacing:-0.325px;font-family:'Liberation Sans', sans-serif;">kHz</span>
<span class="t" style="left:880.20px;top:264.47px;font-size:13.5px;line-height:13.5px;color:#000;letter-spacing:0.064px;font-family:'Liberation Sans', sans-serif;">Advanced-&gt;</span>
<div class="b" style="left:842px;top:296px;width:486px;height:1px;background:#8d8a7a;"></div>
<div class="b" style="left:842px;top:297px;width:486px;height:1px;background:#fff;"></div>
<div class="b" style="left:843px;top:298px;width:190px;height:14px;background:#ece9d8;border-right:1px solid #a5a292;"></div>
<div class="b" style="left:1034px;top:298px;width:294px;height:1px;background:#fff;"></div>
<div class="b" style="left:1034px;top:299px;width:294px;height:13px;background:#c0c0c0;"></div>
<div class="b" style="left:842px;top:312px;width:486px;height:2px;background:linear-gradient(#fff,#eef0fa);"></div>
<span class="t" style="left:909.60px;top:301.57px;font-size:10.3px;line-height:10.3px;color:#000;letter-spacing:0.678px;font-family:'Liberation Serif', serif;font-weight:bold;">Parameters</span>
<div class="b" style="left:839px;top:322px;width:493px;height:315px;background:#7685dc;border-radius:7px 7px 0 0;"></div>
<div class="b tb" style="left:839px;top:322px;width:493px;height:35px;border-radius:7px 7px 0 0;"></div>
<div class="b" style="left:839px;top:330px;width:1px;height:307px;background:#6a74d2;"></div>
<div class="b" style="left:840px;top:330px;width:2px;height:307px;background:#7b93e0;"></div>
<div class="b" style="left:1328px;top:357px;width:1px;height:280px;background:#7587dc;"></div>
<div class="b" style="left:1329px;top:330px;width:1px;height:307px;background:#6878d0;"></div>
<div class="b" style="left:1330px;top:330px;width:2px;height:307px;background:linear-gradient(to right,#5a68bc,#4c5596);"></div>
<div class="b" style="left:839px;top:634px;width:493px;height:1px;background:#7a88e2;"></div>
<div class="b" style="left:839px;top:635px;width:493px;height:2px;background:#6a76d6;"></div>
<div class="b" style="left:842px;top:357px;width:486px;height:277px;background:#ece9d8;border-top:1px solid #fff;"></div>
<svg width="11" height="16" viewBox="0 0 11 16" preserveAspectRatio="none" style="left:848px;top:331px"><rect x="0" y="0" width="11" height="16" fill="#000"/><rect x="1.1" y="1.3" width="8.7" height="13.5" fill="#c6c6c6"/><rect x="1.1" y="1.3" width="8.7" height="1.2" fill="#e4e4e4"/><rect x="7" y="2.7" width="2.8" height="7.2" fill="#000"/><rect x="5" y="11.2" width="4.8" height="1.5" fill="#000"/><rect x="4.2" y="13.6" width="5.6" height="1.2" fill="#111"/></svg><span class="t" style="left:868.20px;top:334.65px;font-size:15.3px;line-height:15.3px;color:#d9e4f9;letter-spacing:-0.051px;font-family:'Liberation Sans', sans-serif;font-weight:bold;">[2]Closed</span>
<span class="t" style="left:943.80px;top:334.65px;font-size:15.3px;line-height:15.3px;color:#d9e4f9;letter-spacing:0.000px;font-family:'Liberation Sans', sans-serif;font-weight:bold;">:</span>
<span class="t" style="left:954.10px;top:334.65px;font-size:15.3px;line-height:15.3px;color:#d9e4f9;letter-spacing:0.030px;font-family:'Liberation Sans', sans-serif;font-weight:bold;">Autostudio</span>
<span class="t" style="left:1040.90px;top:334.65px;font-size:15.3px;line-height:15.3px;color:#d9e4f9;letter-spacing:-0.463px;font-family:'Liberation Sans', sans-serif;font-weight:bold;">REF15D2</span>
<div class="b" style="left:1241px;top:327px;width:26px;height:26px;border-radius:4px;border:1px solid #b4c8f6;background:linear-gradient(135deg,#5f88ee 0%,#4a74e4 45%,#3f68dc 100%);"><div class="b" style="left:3px;top:17.5px;width:11.5px;height:4px;background:#fff;"></div>
</div>
<div class="b" style="left:1270px;top:327px;width:26px;height:26px;border-radius:4px;border:1px solid #8ea3ea;background:linear-gradient(135deg,#728fe6 0%,#6483de 100%);"><div class="b" style="left:3px;top:3px;width:19px;height:17px;border:2px solid #8a9fea;border-top:3px solid #8a9fea;"></div>
</div>
<div class="b" style="left:1299px;top:327px;width:26px;height:26px;border-radius:4px;border:1px solid #d9a0b6;background:linear-gradient(135deg,#c8687e 0%,#bd5f78 100%);"><svg width="24" height="24" style="left:0;top:0"><path d="M3.9 4.1 L19.8 20.6 M19.8 4.1 L3.9 20.6" stroke="#fff" stroke-width="3.9" stroke-linecap="butt" fill="none"/></svg></div>
<div class="b" style="left:842px;top:380px;width:486px;height:1px;background:#fff;"></div>
<div class="b" style="left:845px;top:360px;width:52px;height:20px;background:#ece9d8;border-top:1px solid #fff;border-left:1px solid #fff;border-right:1px solid #fbfaf4;"></div>
<span class="t" style="left:849.90px;top:364.17px;font-size:13.5px;line-height:13.5px;color:#000;letter-spacing:0.120px;font-family:'Liberation Sans', sans-serif;">Driver</span>
<div class="b" style="left:897px;top:358px;width:57px;height:24px;background:#ece9d8;border-top:1px solid #fff;border-left:1px solid #fff;border-right:2px solid #7d7a6b;"></div>
<span class="t" style="left:903.90px;top:362.17px;font-size:13.5px;line-height:13.5px;color:#000;letter-spacing:0.119px;font-family:'Liberation Sans', sans-serif;">Box</span>
<div class="b" style="left:954px;top:360px;width:52px;height:20px;background:#ece9d8;border-top:1px solid #fff;border-right:2px solid #8f8c7c;"></div>
<span class="t" style="left:957.90px;top:364.17px;font-size:13.5px;line-height:13.5px;color:#000;letter-spacing:0.079px;font-family:'Liberation Sans', sans-serif;">Plot</span>
<div class="b" style="left:1006px;top:360px;width:54px;height:20px;background:#ece9d8;border-top:1px solid #fff;border-right:2px solid #8f8c7c;"></div>
<span class="t" style="left:1011.90px;top:364.17px;font-size:13.5px;line-height:13.5px;color:#000;letter-spacing:0.095px;font-family:'Liberation Sans', sans-serif;">Signal</span>
<div class="b" style="left:1060px;top:360px;width:64px;height:20px;background:#ece9d8;border-top:1px solid #fff;border-right:2px solid #8f8c7c;"></div>
<span class="t" style="left:1065.90px;top:364.17px;font-size:13.5px;line-height:13.5px;color:#000;letter-spacing:-0.157px;font-family:'Liberation Sans', sans-serif;">EQ/Filter</span>
<div class="b" style="left:1124px;top:360px;width:54px;height:20px;background:#ece9d8;border-top:1px solid #fff;border-right:2px solid #8f8c7c;"></div>
<span class="t" style="left:1129.90px;top:364.17px;font-size:13.5px;line-height:13.5px;color:#000;letter-spacing:0.164px;font-family:'Liberation Sans', sans-serif;">Project</span>
<div class="b sunk" style="left:851px;top:389px;width:372px;height:20px;"></div>
<span class="t" style="left:852.40px;top:393.07px;font-size:13.5px;line-height:13.5px;color:#000;letter-spacing:0.195px;font-family:'Liberation Sans', sans-serif;">Closed</span>
<div class="b" style="left:1228px;top:389px;width:88px;height:22px;border-top:1px solid #aca899;border-left:1px solid #aca899;border-right:1px solid #fff;border-bottom:1px solid #fff;"></div>
<div class="b" style="left:1230px;top:391px;width:85px;height:19px;background:#ece9d8;border-top:1px solid #fff;border-left:1px solid #fff;border-right:1px solid #77756a;border-bottom:1px solid #77756a;"></div>
<span class="t" style="left:1239.90px;top:393.37px;font-size:13.5px;line-height:13.5px;color:#000;letter-spacing:-0.037px;font-family:'Liberation Sans', sans-serif;">Box shape</span>
<div class="b raised" style="left:852px;top:415px;width:131px;height:19px;"></div>
<span class="t" style="left:873.60px;top:418.07px;font-size:13.5px;line-height:13.5px;color:#000;letter-spacing:0.133px;font-family:'Liberation Sans', sans-serif;">Rear chamber</span>
<div class="b raised" style="left:988px;top:415px;width:124px;height:19px;"></div>
<span class="t" style="left:1006.90px;top:418.07px;font-size:13.5px;line-height:13.5px;color:#000;letter-spacing:-0.065px;font-family:'Liberation Sans', sans-serif;">Front chamber</span>
<svg width="90" height="120" style="left:1117px;top:419px"><rect x="1" y="1" width="85" height="116" fill="#fff" stroke="#000" stroke-width="2"/><rect x="62.3" y="26" width="9" height="39" rx="3.5" fill="#000"/><path d="M70 34 L73 29.3 L76.5 23.3 L80.5 20 L86 18.6 V71.5 L80.5 69.8 L76.5 66.8 L73 61.2 L70 57 Z" fill="#000"/><rect x="79" y="28.5" width="3.2" height="2.2" fill="#cfcfcf"/><rect x="78.5" y="43" width="3.6" height="3" fill="#cfcfcf"/><rect x="79" y="57.5" width="3.2" height="2.6" fill="#cfcfcf"/></svg><div class="b" style="left:852px;top:439px;width:131px;height:167px;border:1px solid #a5a292;border-right:1px solid #fff;border-bottom:1px solid #fff;"></div>
<div class="b" style="left:853px;top:440px;width:129px;height:165px;border-left:1px solid #fff;border-top:1px solid #fff;border-right:1px solid #a5a292;border-bottom:1px solid #a5a292;"></div>
<span class="t" style="left:857.40px;top:447.07px;font-size:13.5px;line-height:13.5px;color:#1a1aa4;letter-spacing:0.137px;font-family:'Liberation Sans', sans-serif;">Volume:</span>
<div class="b" style="left:858px;top:464px;width:81px;height:22px;background:#fff;border-top:1px solid #8c8a7c;border-left:1px solid #8c8a7c;border-right:1px solid #d8d5c6;border-bottom:1px solid #d8d5c6;"></div>
<div class="b" style="left:947px;top:476px;width:1px;height:10px;background:#222;"></div>
<span class="t" style="left:861.00px;top:468.67px;font-size:13.5px;line-height:13.5px;color:#000;letter-spacing:-1.012px;font-family:'Liberation Sans', sans-serif;">100</span>
<span class="t" style="left:857.40px;top:490.87px;font-size:13.5px;line-height:13.5px;color:#1a1aa4;letter-spacing:-0.166px;font-family:'Liberation Sans', sans-serif;">Fsc:</span>
<div class="b" style="left:858px;top:507px;width:81px;height:22px;background:#fff;border-top:1px solid #8c8a7c;border-left:1px solid #8c8a7c;border-right:1px solid #d8d5c6;border-bottom:1px solid #d8d5c6;"></div>
<span class="t" style="left:861.00px;top:511.57px;font-size:13.5px;line-height:13.5px;color:#a3a197;letter-spacing:-0.667px;font-family:'Liberation Sans', sans-serif;">0,05763</span>
<span class="t" style="left:946.00px;top:518.77px;font-size:13.5px;line-height:13.5px;color:#000;letter-spacing:-0.325px;font-family:'Liberation Sans', sans-serif;">kHz</span>
<span class="t" style="left:857.90px;top:538.57px;font-size:13.5px;line-height:13.5px;color:#000;letter-spacing:-0.584px;font-family:'Liberation Sans', sans-serif;">Qtc:</span>
<div class="b sunk" style="left:858px;top:556px;width:81px;height:20px;"></div>
<span class="t" style="left:858.90px;top:559.57px;font-size:13.5px;line-height:13.5px;color:#000;letter-spacing:-0.446px;font-family:'Liberation Sans', sans-serif;">0,904</span>
<span class="t" style="left:880.20px;top:584.47px;font-size:13.5px;line-height:13.5px;color:#000;letter-spacing:0.064px;font-family:'Liberation Sans', sans-serif;">Advanced-&gt;</span>
<div class="b" style="left:842px;top:616px;width:486px;height:1px;background:#8d8a7a;"></div>
<div class="b" style="left:842px;top:617px;width:486px;height:1px;background:#fff;"></div>
<div class="b" style="left:843px;top:618px;width:190px;height:14px;background:#ece9d8;border-right:1px solid #a5a292;"></div>
<div class="b" style="left:1034px;top:618px;width:294px;height:1px;background:#fff;"></div>
<div class="b" style="left:1034px;top:619px;width:294px;height:13px;background:#ffff0a;"></div>
<div class="b" style="left:842px;top:632px;width:486px;height:2px;background:linear-gradient(#fff,#eef0fa);"></div>
<span class="t" style="left:909.60px;top:621.57px;font-size:10.3px;line-height:10.3px;color:#000;letter-spacing:0.678px;font-family:'Liberation Serif', serif;font-weight:bold;">Parameters</span>
<div class="b" style="left:839px;top:642px;width:493px;height:315px;background:#7685dc;border-radius:7px 7px 0 0;"></div>
<div class="b tb" style="left:839px;top:642px;width:493px;height:35px;border-radius:7px 7px 0 0;"></div>
<div class="b" style="left:839px;top:650px;width:1px;height:307px;background:#6a74d2;"></div>
<div class="b" style="left:840px;top:650px;width:2px;height:307px;background:#7b93e0;"></div>
<div class="b" style="left:1328px;top:677px;width:1px;height:280px;background:#7587dc;"></div>
<div class="b" style="left:1329px;top:650px;width:1px;height:307px;background:#6878d0;"></div>
<div class="b" style="left:1330px;top:650px;width:2px;height:307px;background:linear-gradient(to right,#5a68bc,#4c5596);"></div>
<div class="b" style="left:839px;top:954px;width:493px;height:1px;background:#7a88e2;"></div>
<div class="b" style="left:839px;top:955px;width:493px;height:2px;background:#6a76d6;"></div>
<div class="b" style="left:842px;top:677px;width:486px;height:277px;background:#ece9d8;border-top:1px solid #fff;"></div>
<svg width="11" height="16" viewBox="0 0 11 16" preserveAspectRatio="none" style="left:848px;top:651px"><rect x="0" y="0" width="11" height="16" fill="#000"/><rect x="1.1" y="1.3" width="8.7" height="13.5" fill="#c6c6c6"/><rect x="1.1" y="1.3" width="8.7" height="1.2" fill="#e4e4e4"/><rect x="7" y="2.7" width="2.8" height="7.2" fill="#000"/><rect x="5" y="11.2" width="4.8" height="1.5" fill="#000"/><rect x="4.2" y="13.6" width="5.6" height="1.2" fill="#111"/></svg><span class="t" style="left:868.20px;top:654.65px;font-size:15.3px;line-height:15.3px;color:#d9e4f9;letter-spacing:0.417px;font-family:'Liberation Sans', sans-serif;font-weight:bold;">[3]Vented</span>
<span class="t" style="left:946.70px;top:654.65px;font-size:15.3px;line-height:15.3px;color:#d9e4f9;letter-spacing:0.000px;font-family:'Liberation Sans', sans-serif;font-weight:bold;">:</span>
<span class="t" style="left:957.00px;top:654.65px;font-size:15.3px;line-height:15.3px;color:#d9e4f9;letter-spacing:0.030px;font-family:'Liberation Sans', sans-serif;font-weight:bold;">Autostudio</span>
<span class="t" style="left:1043.80px;top:654.65px;font-size:15.3px;line-height:15.3px;color:#d9e4f9;letter-spacing:-0.463px;font-family:'Liberation Sans', sans-serif;font-weight:bold;">REF15D2</span>
<div class="b" style="left:1241px;top:647px;width:26px;height:26px;border-radius:4px;border:1px solid #b4c8f6;background:linear-gradient(135deg,#5f88ee 0%,#4a74e4 45%,#3f68dc 100%);"><div class="b" style="left:3px;top:17.5px;width:11.5px;height:4px;background:#fff;"></div>
</div>
<div class="b" style="left:1270px;top:647px;width:26px;height:26px;border-radius:4px;border:1px solid #8ea3ea;background:linear-gradient(135deg,#728fe6 0%,#6483de 100%);"><div class="b" style="left:3px;top:3px;width:19px;height:17px;border:2px solid #8a9fea;border-top:3px solid #8a9fea;"></div>
</div>
<div class="b" style="left:1299px;top:647px;width:26px;height:26px;border-radius:4px;border:1px solid #d9a0b6;background:linear-gradient(135deg,#c8687e 0%,#bd5f78 100%);"><svg width="24" height="24" style="left:0;top:0"><path d="M3.9 4.1 L19.8 20.6 M19.8 4.1 L3.9 20.6" stroke="#fff" stroke-width="3.9" stroke-linecap="butt" fill="none"/></svg></div>
<div class="b" style="left:842px;top:700px;width:486px;height:1px;background:#fff;"></div>
<div class="b" style="left:845px;top:680px;width:52px;height:20px;background:#ece9d8;border-top:1px solid #fff;border-left:1px solid #fff;border-right:1px solid #fbfaf4;"></div>
<span class="t" style="left:849.90px;top:684.17px;font-size:13.5px;line-height:13.5px;color:#000;letter-spacing:0.120px;font-family:'Liberation Sans', sans-serif;">Driver</span>
<div class="b" style="left:897px;top:678px;width:57px;height:24px;background:#ece9d8;border-top:1px solid #fff;border-left:1px solid #fff;border-right:2px solid #7d7a6b;"></div>
<span class="t" style="left:903.90px;top:682.17px;font-size:13.5px;line-height:13.5px;color:#000;letter-spacing:0.119px;font-family:'Liberation Sans', sans-serif;">Box</span>
<div class="b" style="left:954px;top:680px;width:52px;height:20px;background:#ece9d8;border-top:1px solid #fff;border-right:2px solid #8f8c7c;"></div>
<span class="t" style="left:957.90px;top:684.17px;font-size:13.5px;line-height:13.5px;color:#000;letter-spacing:0.056px;font-family:'Liberation Sans', sans-serif;">Vents</span>
<div class="b" style="left:1006px;top:680px;width:54px;height:20px;background:#ece9d8;border-top:1px solid #fff;border-right:2px solid #8f8c7c;"></div>
<span class="t" style="left:1011.90px;top:684.17px;font-size:13.5px;line-height:13.5px;color:#000;letter-spacing:0.079px;font-family:'Liberation Sans', sans-serif;">Plot</span>
<div class="b" style="left:1060px;top:680px;width:54px;height:20px;background:#ece9d8;border-top:1px solid #fff;border-right:2px solid #8f8c7c;"></div>
<span class="t" style="left:1065.90px;top:684.17px;font-size:13.5px;line-height:13.5px;color:#000;letter-spacing:0.095px;font-family:'Liberation Sans', sans-serif;">Signal</span>
<div class="b" style="left:1114px;top:680px;width:64px;height:20px;background:#ece9d8;border-top:1px solid #fff;border-right:2px solid #8f8c7c;"></div>
<span class="t" style="left:1119.90px;top:684.17px;font-size:13.5px;line-height:13.5px;color:#000;letter-spacing:-0.157px;font-family:'Liberation Sans', sans-serif;">EQ/Filter</span>
<div class="b" style="left:1178px;top:680px;width:54px;height:20px;background:#ece9d8;border-top:1px solid #fff;border-right:2px solid #8f8c7c;"></div>
<span class="t" style="left:1183.90px;top:684.17px;font-size:13.5px;line-height:13.5px;color:#000;letter-spacing:0.164px;font-family:'Liberation Sans', sans-serif;">Project</span>
<div class="b sunk" style="left:851px;top:709px;width:372px;height:20px;"></div>
<span class="t" style="left:852.40px;top:713.07px;font-size:13.5px;line-height:13.5px;color:#000;letter-spacing:0.391px;font-family:'Liberation Sans', sans-serif;">Vented</span>
<div class="b" style="left:1228px;top:709px;width:88px;height:22px;border-top:1px solid #aca899;border-left:1px solid #aca899;border-right:1px solid #fff;border-bottom:1px solid #fff;"></div>
<div class="b" style="left:1230px;top:711px;width:85px;height:19px;background:#ece9d8;border-top:1px solid #fff;border-left:1px solid #fff;border-right:1px solid #77756a;border-bottom:1px solid #77756a;"></div>
<span class="t" style="left:1239.90px;top:713.37px;font-size:13.5px;line-height:13.5px;color:#000;letter-spacing:-0.037px;font-family:'Liberation Sans', sans-serif;">Box shape</span>
<div class="b raised" style="left:852px;top:735px;width:131px;height:19px;"></div>
<span class="t" style="left:873.60px;top:738.07px;font-size:13.5px;line-height:13.5px;color:#000;letter-spacing:0.133px;font-family:'Liberation Sans', sans-serif;">Rear chamber</span>
<div class="b raised" style="left:988px;top:735px;width:124px;height:19px;"></div>
<span class="t" style="left:1006.90px;top:738.07px;font-size:13.5px;line-height:13.5px;color:#000;letter-spacing:-0.065px;font-family:'Liberation Sans', sans-serif;">Front chamber</span>
<svg width="90" height="120" style="left:1117px;top:739px"><rect x="1" y="1" width="85" height="116" fill="#fff" stroke="#000" stroke-width="2"/><rect x="62.3" y="26" width="9" height="39" rx="3.5" fill="#000"/><path d="M70 34 L73 29.3 L76.5 23.3 L80.5 20 L86 18.6 V71.5 L80.5 69.8 L76.5 66.8 L73 61.2 L70 57 Z" fill="#000"/><rect x="79" y="28.5" width="3.2" height="2.2" fill="#cfcfcf"/><rect x="78.5" y="43" width="3.6" height="3" fill="#cfcfcf"/><rect x="79" y="57.5" width="3.2" height="2.6" fill="#cfcfcf"/><rect x="85" y="88" width="2" height="16" fill="#fff"/><rect x="41" y="85.4" width="46" height="2.3" fill="#000"/><rect x="41" y="103.6" width="46" height="3.2" fill="#000"/></svg><div class="b" style="left:852px;top:759px;width:131px;height:167px;border:1px solid #a5a292;border-right:1px solid #fff;border-bottom:1px solid #fff;"></div>
<div class="b" style="left:853px;top:760px;width:129px;height:165px;border-left:1px solid #fff;border-top:1px solid #fff;border-right:1px solid #a5a292;border-bottom:1px solid #a5a292;"></div>
<span class="t" style="left:857.40px;top:767.07px;font-size:13.5px;line-height:13.5px;color:#1a1aa4;letter-spacing:0.137px;font-family:'Liberation Sans', sans-serif;">Volume:</span>
<div class="b" style="left:858px;top:784px;width:81px;height:22px;background:#fff;border-top:1px solid #8c8a7c;border-left:1px solid #8c8a7c;border-right:1px solid #d8d5c6;border-bottom:1px solid #d8d5c6;"></div>
<div class="b" style="left:947px;top:796px;width:1px;height:10px;background:#222;"></div>
<span class="t" style="left:861.00px;top:788.67px;font-size:13.5px;line-height:13.5px;color:#000;letter-spacing:-0.738px;font-family:'Liberation Sans', sans-serif;">200,00</span>
<span class="t" style="left:857.40px;top:810.87px;font-size:13.5px;line-height:13.5px;color:#1a1aa4;letter-spacing:-0.141px;font-family:'Liberation Sans', sans-serif;">Tuning freq.:</span>
<div class="b" style="left:858px;top:827px;width:81px;height:22px;background:#fff;border-top:1px solid #8c8a7c;border-left:1px solid #8c8a7c;border-right:1px solid #d8d5c6;border-bottom:1px solid #d8d5c6;"></div>
<span class="t" style="left:861.00px;top:831.57px;font-size:13.5px;line-height:13.5px;color:#000;letter-spacing:-0.821px;font-family:'Liberation Sans', sans-serif;">0,022</span>
<span class="t" style="left:946.00px;top:838.77px;font-size:13.5px;line-height:13.5px;color:#000;letter-spacing:-0.325px;font-family:'Liberation Sans', sans-serif;">kHz</span>
<span class="t" style="left:880.20px;top:904.47px;font-size:13.5px;line-height:13.5px;color:#000;letter-spacing:0.064px;font-family:'Liberation Sans', sans-serif;">Advanced-&gt;</span>
<div class="b" style="left:842px;top:936px;width:486px;height:1px;background:#8d8a7a;"></div>
<div class="b" style="left:842px;top:937px;width:486px;height:1px;background:#fff;"></div>
<div class="b" style="left:843px;top:938px;width:190px;height:14px;background:#ece9d8;border-right:1px solid #a5a292;"></div>
<div class="b" style="left:1034px;top:938px;width:294px;height:1px;background:#fff;"></div>
<div class="b" style="left:1034px;top:939px;width:294px;height:13px;background:#00ee0a;"></div>
<div class="b" style="left:842px;top:952px;width:486px;height:2px;background:linear-gradient(#fff,#eef0fa);"></div>
<span class="t" style="left:909.60px;top:941.57px;font-size:10.3px;line-height:10.3px;color:#000;letter-spacing:0.678px;font-family:'Liberation Serif', serif;font-weight:bold;">Parameters</span>
</body></html>
